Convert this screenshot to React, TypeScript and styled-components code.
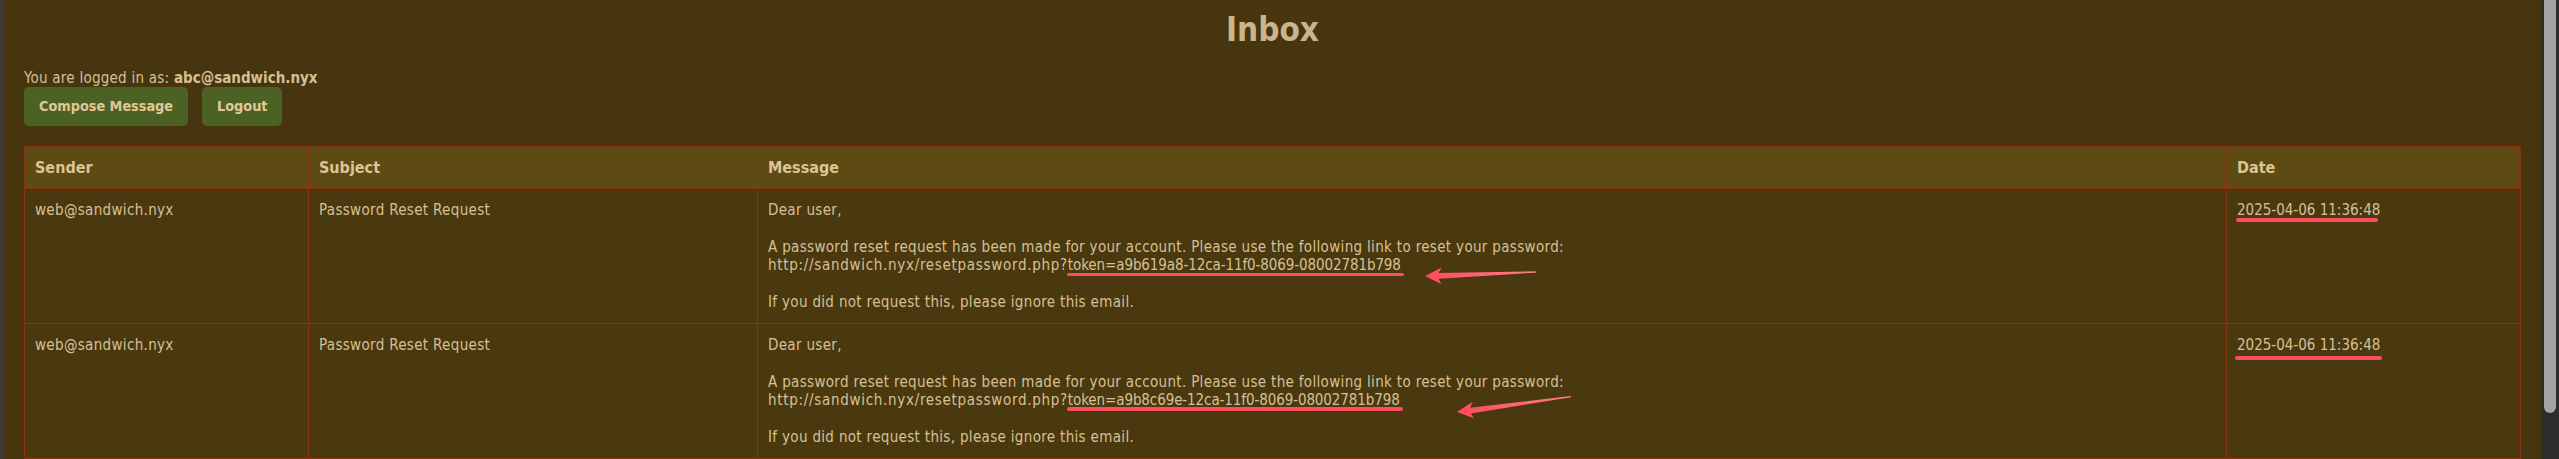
import React from "react";
import styled, { createGlobalStyle } from "styled-components";

const GlobalStyle = createGlobalStyle`
  html, body {
    margin: 0;
    padding: 0;
    background: #46350e;
  }
  body {
    font-family: "DejaVu Sans Condensed", "DejaVu Sans", sans-serif;
    font-stretch: condensed;
  }
`;

const Frame = styled.div`
  display: flex;
  height: 459px;
  overflow: hidden;
`;

const LeftEdge = styled.div`
  flex: none;
  width: 4px;
  background: #3a3a3c;
`;

const Page = styled.main`
  flex: 1;
  min-width: 0;
  padding: 0 20px;
  background: #46350e;
  color: #d6c096;
  font-size: 15px;
`;

const Scrollbar = styled.div`
  flex: none;
  width: 18px;
  box-sizing: border-box;
  padding-left: 3px;
  background: #2d2d2d;
  display: flex;
`;

const Thumb = styled.div`
  width: 12px;
  height: 413px;
  background: #a3a3a3;
  border-radius: 0 0 6px 6px;
`;

const Title = styled.h1`
  margin: 10px 0 0;
  text-align: center;
  font-size: 33px;
  line-height: 40px;
  font-weight: 700;
  color: #cbb38b;
`;

const LoginLine = styled.div`
  margin-top: 18.5px;
  line-height: 18.5px;
  font-size: 15px;
  letter-spacing: 0.25px;
  & b {
    font-weight: 700;
    letter-spacing: 0;
  }
`;

const ButtonRow = styled.div`
  display: flex;
  gap: 14px;
`;

const Button = styled.button`
  font-family: inherit;
  font-stretch: inherit;
  background: #4c6224;
  color: #e2c796;
  border: none;
  border-radius: 5px;
  padding: 10px 15px;
  font-size: 14.3px;
  line-height: 19px;
  font-weight: 700;
  cursor: pointer;
`;

const Table = styled.table`
  margin-top: 20px;
  width: 100%;
  border-collapse: collapse;
  table-layout: fixed;
  border: 1px solid #8a3210;
`;

const HeadCell = styled.th`
  text-align: left;
  padding: 12px 12px 12px 10px;
  font-size: 16px;
  line-height: 17px;
  font-weight: 700;
  color: #dcc497;
  background: #5e4a13;
  border: 1px solid #8a3210;
`;

const Cell = styled.td`
  vertical-align: top;
  padding: 12px 12px 12px 10px;
  font-size: 15px;
  line-height: 18.33px;
  letter-spacing: 0.33px;
  background: #4a380e;
  border: 1px solid #8a3210;
`;

const Url = styled.span`
  letter-spacing: 0.7px;
`;

const Mark = styled.span<{ $top: number; $left: number; $right: number; $thick: number; $spacing: number }>`
  position: relative;
  letter-spacing: ${(p) => p.$spacing}px;
  &::after {
    content: "";
    position: absolute;
    left: ${(p) => -p.$left}px;
    right: ${(p) => -p.$right}px;
    top: calc(100% + ${(p) => p.$top}px);
    height: ${(p) => p.$thick}px;
    background: #ff4b5e;
    border-radius: 2px;
  }
`;

const ArrowSvg = styled.svg<{ $dx: number; $dy: number }>`
  position: absolute;
  left: calc(100% + ${(p) => p.$dx}px);
  top: ${(p) => p.$dy}px;
  width: 1px;
  height: 1px;
  overflow: visible;
  pointer-events: none;
`;

type MarkSpec = { top: number; left: number; right: number; thick: number };

const Arrow = ({ dx, dy, angle, length }: { dx: number; dy: number; angle: number; length: number }) => (
  <ArrowSvg $dx={dx} $dy={dy} viewBox="0 0 1 1">
    <defs>
      <linearGradient id={`ag${dx}`} x1="0" x2="1" y1="0" y2="0">
        <stop offset="0" stopColor="#ff4a5d" />
        <stop offset="1" stopColor="#ff7d88" />
      </linearGradient>
    </defs>
    <g transform={`rotate(${angle})`}>
      <polygon
        points={`0,0 17,-8 13.5,-2.6 ${length},-0.8 ${length},0.5 13.5,3.2 16,8.5`}
        fill={`url(#ag${dx})`}
      />
    </g>
  </ArrowSvg>
);

type Row = {
  sender: string;
  subject: string;
  token: string;
  date: string;
  tokenMark: MarkSpec;
  dateMark: MarkSpec;
  arrow: { dx: number; dy: number; angle: number; length: number };
};

const rows: Row[] = [
  {
    sender: "web@sandwich.nyx",
    subject: "Password Reset Request",
    token: "a9b619a8-12ca-11f0-8069-08002781b798",
    date: "2025-04-06 11:36:48",
    tokenMark: { top: -1, left: 1, right: 3, thick: 3.5 },
    dateMark: { top: -1.5, left: 1, right: -2, thick: 4 },
    arrow: { dx: 24, dy: 20, angle: -2, length: 111 },
  },
  {
    sender: "web@sandwich.nyx",
    subject: "Password Reset Request",
    token: "a9b8c69e-12ca-11f0-8069-08002781b798",
    date: "2025-04-06 11:36:48",
    tokenMark: { top: -2, left: 1, right: 3, thick: 4 },
    dateMark: { top: 2.5, left: 2, right: 2, thick: 4 },
    arrow: { dx: 57, dy: 21, angle: -7.6, length: 115 },
  },
];

export default function App() {
  return (
    <>
      <GlobalStyle />
      <Frame>
        <LeftEdge />
        <Page>
          <Title>Inbox</Title>
          <LoginLine>
            You are logged in as: <b>abc@sandwich.nyx</b>
          </LoginLine>
          <ButtonRow>
            <Button>Compose Message</Button>
            <Button>Logout</Button>
          </ButtonRow>
          <Table>
            <colgroup>
              <col style={{ width: 284 }} />
              <col style={{ width: 449 }} />
              <col style={{ width: 1469 }} />
              <col />
            </colgroup>
            <thead>
              <tr>
                <HeadCell>Sender</HeadCell>
                <HeadCell>Subject</HeadCell>
                <HeadCell>Message</HeadCell>
                <HeadCell>Date</HeadCell>
              </tr>
            </thead>
            <tbody>
              {rows.map((r, i) => (
                <tr key={i}>
                  <Cell>{r.sender}</Cell>
                  <Cell>{r.subject}</Cell>
                  <Cell>
                    Dear user,
                    <br />
                    <br />
                    A password reset request has been made for your account. Please use the following link to reset your password:
                    <br />
                    <Url>http://sandwich.nyx/resetpassword.php?</Url>
                    <Mark
                      $top={r.tokenMark.top}
                      $left={r.tokenMark.left}
                      $right={r.tokenMark.right}
                      $thick={r.tokenMark.thick}
                      $spacing={-0.1}
                    >
                      token={r.token}
                      <Arrow {...r.arrow} />
                    </Mark>
                    <br />
                    <br />
                    If you did not request this, please ignore this email.
                  </Cell>
                  <Cell>
                    <Mark
                      $top={r.dateMark.top}
                      $left={r.dateMark.left}
                      $right={r.dateMark.right}
                      $thick={r.dateMark.thick}
                      $spacing={0}
                    >
                      {r.date}
                    </Mark>
                  </Cell>
                </tr>
              ))}
            </tbody>
          </Table>
        </Page>
        <Scrollbar>
          <Thumb />
        </Scrollbar>
      </Frame>
    </>
  );
}
